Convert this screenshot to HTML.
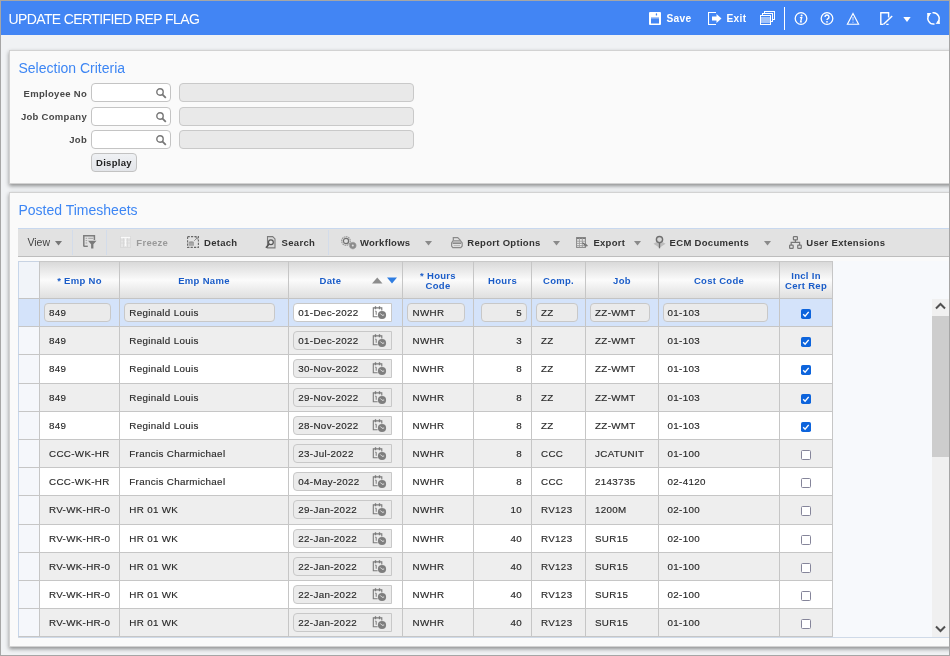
<!DOCTYPE html>
<html><head><meta charset="utf-8"><style>
html,body{margin:0;padding:0;width:950px;height:656px;overflow:hidden;background:#f0f2f4;}
.b,.t{position:absolute;box-sizing:border-box;}
.t{white-space:nowrap;font-family:"Liberation Sans",sans-serif;}
#root{position:absolute;left:0;top:0;width:950px;height:656px;will-change:transform;}
</style></head><body><div id="root">
<div class="b" style="left:0px;top:0px;width:950px;height:656px;border:1px solid #a6a6a6;box-sizing:border-box;background:#f0f2f4;"></div>
<div class="b" style="left:1px;top:1px;width:948px;height:34px;background:#4285f4;"></div>
<div class="t" style="left:8.5px;top:11.15px;font-size:14px;line-height:16.8px;color:#fff;font-weight:normal;letter-spacing:-.62px">UPDATE CERTIFIED REP FLAG</div>
<svg class="b" style="left:649px;top:12px" width="12" height="13" viewBox="0 0 12 13"><rect x="0" y="0" width="12" height="13" rx="1" fill="#fff"/><rect x="2" y="5" width="8" height="1.2" fill="#a9c7f7"/><rect x="2" y="6.3" width="8" height="5.2" fill="#4285f4"/><rect x="6.8" y="1.3" width="1.3" height="2.2" rx=".6" fill="#4285f4"/></svg>
<div class="t" style="left:666.5px;top:12.95px;font-size:10.2px;line-height:12.24px;color:#fff;font-weight:bold;letter-spacing:.3px">Save</div>
<svg class="b" style="left:708px;top:12px" width="15" height="13" viewBox="0 0 15 13"><path d="M8 0.5H0.5v12H8" fill="none" stroke="#fff" stroke-width="1.1"/><path d="M4 4.5h4.5V2l5 4.5-5 4.5V8.5H4z" fill="#fff"/></svg>
<div class="t" style="left:726.5px;top:12.95px;font-size:10.2px;line-height:12.24px;color:#fff;font-weight:bold;letter-spacing:.3px">Exit</div>
<svg class="b" style="left:760px;top:11px" width="15" height="14" viewBox="0 0 15 14"><rect x="4.5" y="0.5" width="10" height="8" fill="none" stroke="#fff"/><rect x="2.5" y="2.5" width="10" height="8" fill="#4285f4" stroke="#fff"/><rect x="0.5" y="4.5" width="10" height="9" fill="#4285f4" stroke="#fff"/><path d="M1 7h9M1 9h9M1 11h9" stroke="#fff"/></svg>
<div class="b" style="left:784px;top:7px;width:1px;height:23px;background:#fff;"></div>
<svg class="b" style="left:794px;top:12px" width="14" height="14" viewBox="0 0 14 14"><circle cx="7" cy="6.5" r="5.8" fill="none" stroke="#fff" stroke-width="1.3"/><circle cx="7.6" cy="3.6" r="1" fill="#fff"/><path d="M5.9 5.6h1.8l-1.1 4.3h1.3" fill="none" stroke="#fff" stroke-width="1.3"/></svg>
<svg class="b" style="left:820px;top:12px" width="14" height="14" viewBox="0 0 14 14"><circle cx="7" cy="6.5" r="5.8" fill="none" stroke="#fff" stroke-width="1.3"/><path d="M5 5a2 2 0 1 1 2.8 1.8c-.6.3-.8.6-.8 1.3" fill="none" stroke="#fff" stroke-width="1.4"/><circle cx="7" cy="9.8" r=".9" fill="#fff"/></svg>
<svg class="b" style="left:846px;top:12px" width="14" height="13" viewBox="0 0 14 13"><path d="M7 1.6L12.6 12.2H1.4z" fill="none" stroke="#fff" stroke-width="1.15"/><path d="M7 5v3.6" stroke="#fff" stroke-opacity=".7" stroke-width="1.1"/><circle cx="7" cy="10.2" r=".6" fill="#fff" fill-opacity=".7"/></svg>
<svg class="b" style="left:879px;top:11px" width="15" height="15" viewBox="0 0 15 15"><path d="M1.8 1.5v12.3M1.2 1.8h8.4V6.5M1.2 13.4h3.2M7.3 13.4h2.3" fill="none" stroke="#fff" stroke-width="1.4"/><path d="M4.6 13.2L13.2 5" stroke="#fff" stroke-width="1.5"/></svg>
<svg class="b" style="left:903px;top:17px" width="8" height="5" viewBox="0 0 8 5"><path d="M0.3 0h7.4L4 5z" fill="#fff"/></svg>
<svg class="b" style="left:926px;top:11px" width="15" height="15" viewBox="0 0 15 15"><path d="M6.5 1.8A5.7 5.7 0 0 1 11.5 11.4M8.5 13A5.7 5.7 0 0 1 3.5 3.4" fill="none" stroke="#fff" stroke-width="1.5"/><path d="M1.1 1.9L5.5 2.1 1.4 6.3z" fill="#fff"/><path d="M13.9 12.9L9.5 12.7 13.6 8.5z" fill="#fff"/></svg>
<div class="b" style="left:9px;top:50px;width:946px;height:134px;background:#fafafa;border:1px solid #d2d2d2;box-shadow:0 2px 4px rgba(0,0,0,.42);"></div>
<div class="t" style="left:18.5px;top:59.75px;font-size:14px;line-height:16.8px;color:#3d86f4;font-weight:normal;">Selection Criteria</div>
<div class="t" style="left:0px;top:88.01px;font-size:9.5px;line-height:11.4px;color:#474747;font-weight:bold;width:87px;text-align:right;letter-spacing:.3px;">Employee No</div>
<div class="b" style="left:91px;top:83px;width:80px;height:19.4px;background:#fff;border:1px solid #c4c4c4;border-radius:4px;"></div>
<svg class="b" style="left:156px;top:87.7px" width="11" height="11" viewBox="0 0 11 11"><circle cx="4" cy="4" r="3.2" fill="none" stroke="#777" stroke-width="1.4"/><path d="M6.3 6.3L9.8 9.8" stroke="#777" stroke-width="1.8"/></svg>
<div class="b" style="left:179px;top:83px;width:235px;height:19.4px;background:#e9e9e9;border:1px solid #c9c9c9;border-radius:4px;"></div>
<div class="t" style="left:0px;top:111.01px;font-size:9.5px;line-height:11.4px;color:#474747;font-weight:bold;width:87px;text-align:right;letter-spacing:.3px;">Job Company</div>
<div class="b" style="left:91px;top:107px;width:80px;height:18.5px;background:#fff;border:1px solid #c4c4c4;border-radius:4px;"></div>
<svg class="b" style="left:156px;top:111.7px" width="11" height="11" viewBox="0 0 11 11"><circle cx="4" cy="4" r="3.2" fill="none" stroke="#777" stroke-width="1.4"/><path d="M6.3 6.3L9.8 9.8" stroke="#777" stroke-width="1.8"/></svg>
<div class="b" style="left:179px;top:107px;width:235px;height:18.5px;background:#e9e9e9;border:1px solid #c9c9c9;border-radius:4px;"></div>
<div class="t" style="left:0px;top:134.01px;font-size:9.5px;line-height:11.4px;color:#474747;font-weight:bold;width:87px;text-align:right;letter-spacing:.3px;">Job</div>
<div class="b" style="left:91px;top:130px;width:80px;height:18.6px;background:#fff;border:1px solid #c4c4c4;border-radius:4px;"></div>
<svg class="b" style="left:156px;top:134.7px" width="11" height="11" viewBox="0 0 11 11"><circle cx="4" cy="4" r="3.2" fill="none" stroke="#777" stroke-width="1.4"/><path d="M6.3 6.3L9.8 9.8" stroke="#777" stroke-width="1.8"/></svg>
<div class="b" style="left:179px;top:130px;width:235px;height:18.6px;background:#e9e9e9;border:1px solid #c9c9c9;border-radius:4px;"></div>
<div class="b" style="left:91px;top:153px;width:46px;height:19px;background:linear-gradient(#eff1f4,#e3e5e9);border:1px solid #c2c2c2;border-radius:4px;"></div>
<div class="t" style="left:96px;top:157.01px;font-size:9.5px;line-height:11.4px;color:#222;font-weight:bold;letter-spacing:.3px;">Display</div>
<div class="b" style="left:9px;top:192px;width:946px;height:455px;background:#fafafa;border:1px solid #d2d2d2;box-shadow:0 2px 4px rgba(0,0,0,.42);"></div>
<div class="t" style="left:18.5px;top:201.75px;font-size:14px;line-height:16.8px;color:#3d86f4;font-weight:normal;">Posted Timesheets</div>
<div class="b" style="left:18px;top:228px;width:932px;height:29px;background:#e2e2e2;border-top:1px solid #c8d8ee;border-bottom:1px solid #bdbdbd;"></div>
<div class="b" style="left:72px;top:230px;width:1px;height:25px;background:#d3dcea;"></div>
<div class="b" style="left:106px;top:230px;width:1px;height:25px;background:#d3dcea;"></div>
<div class="b" style="left:328px;top:230px;width:1px;height:25px;background:#d3dcea;"></div>
<div class="t" style="left:27.4px;top:236.06px;font-size:10.5px;line-height:12.6px;color:#444;font-weight:normal;">View</div>
<svg class="b" style="left:55px;top:241px" width="7" height="5" viewBox="0 0 7 5"><path d="M0 0h7L3.5 4.5z" fill="#777"/></svg>
<svg class="b" style="left:83px;top:235px" width="14" height="14" viewBox="0 0 14 14"><path d="M0.8 11.5V0.8h10.6v4.2" fill="none" stroke="#7d7d7d" stroke-width="1.5"/><path d="M0.8 11.3h4" stroke="#7d7d7d" stroke-width="1.4"/><path d="M2.6 3.3h1.6M5.2 3.3h5M2.6 5.6h1.6M2.6 8h1.6" stroke="#a0a0a0" stroke-width="1"/><path d="M5 5.8h8.5l-3.1 3.4v4.2h-2.3V9.2z" fill="#7a7a7a"/></svg>
<svg class="b" style="left:120px;top:236px" width="11" height="12" viewBox="0 0 11 12"><rect x="0.5" y="0.5" width="10" height="11" fill="#e6e6e6" stroke="#d9d9d9"/><path d="M1 4h9M1 7h9M3.5 2v9M7.5 2v9" stroke="#d6d6d6" stroke-width=".8"/><path d="M0.8 1.4h9.4" stroke="#fafafa" stroke-width="1.4"/><path d="M5.5 2.5v7.5" stroke="#fafafa" stroke-width="1.3"/></svg>
<div class="t" style="left:136.3px;top:237.01px;font-size:9.5px;line-height:11.4px;color:#9a9a9a;font-weight:bold;letter-spacing:.3px;">Freeze</div>
<svg class="b" style="left:187px;top:236px" width="12" height="12" viewBox="0 0 12 12"><rect x="0.6" y="0.6" width="10.8" height="10.8" fill="none" stroke="#666" stroke-width="1.1" stroke-dasharray="2.2 1.2"/><ellipse cx="4.3" cy="6.3" rx="2.6" ry="1" fill="#9a9a9a"/><rect x="1.7" y="6.3" width="5.2" height="3.4" fill="#9a9a9a"/><path d="M2 8h4.6" stroke="#bdbdbd" stroke-width=".7"/><path d="M7.2 4.8l3-3M8.4 1.6h1.9v1.9" fill="none" stroke="#888" stroke-width=".9"/></svg>
<div class="t" style="left:204px;top:237.01px;font-size:9.5px;line-height:11.4px;color:#333;font-weight:bold;letter-spacing:.3px;">Detach</div>
<svg class="b" style="left:265px;top:236px" width="11" height="13" viewBox="0 0 11 13"><path d="M2.5 0.6h5.2l2.3 2.3v9H2.5z" fill="#d9d9d9" stroke="#7a7a7a" stroke-width="1.1"/><circle cx="5.9" cy="6.2" r="2.4" fill="#e8e8e8" stroke="#555" stroke-width="1.2"/><path d="M4.2 8L0.9 11.8" stroke="#555" stroke-width="1.5"/></svg>
<div class="t" style="left:281.6px;top:237.01px;font-size:9.5px;line-height:11.4px;color:#333;font-weight:bold;letter-spacing:.3px;">Search</div>
<svg class="b" style="left:340px;top:235px" width="18" height="15" viewBox="0 0 18 15"><circle cx="6" cy="6" r="4.3" fill="none" stroke="#9a9a9a" stroke-width="1.2" stroke-dasharray="1.6 .6"/><circle cx="6" cy="6" r="2.6" fill="none" stroke="#707070" stroke-width="1.2"/><circle cx="12.8" cy="10.6" r="3.3" fill="#8c8c8c" stroke="#9a9a9a" stroke-width=".8" stroke-dasharray="1.2 .5"/><circle cx="12.8" cy="10.6" r="1" fill="#e2e2e2"/></svg>
<div class="t" style="left:359.9px;top:237.01px;font-size:9.5px;line-height:11.4px;color:#333;font-weight:bold;letter-spacing:.3px;">Workflows</div>
<svg class="b" style="left:425px;top:241px" width="7" height="5" viewBox="0 0 7 5"><path d="M0 0h7L3.5 4.5z" fill="#8a8a8a"/></svg>
<svg class="b" style="left:451px;top:237px" width="12" height="12" viewBox="0 0 12 12"><path d="M2.3 3.6V0.6h4.4l2.6 2.6v0.6" fill="none" stroke="#8a8a8a" stroke-width="1.2"/><path d="M2 3.9h7.6l1.6 2v3.1l-1.4 1.6H1.8L0.6 9V5.9z" fill="none" stroke="#8a8a8a" stroke-width="1.2"/><path d="M1.6 6.2h8.6" stroke="#8a8a8a" stroke-width="1.6"/><path d="M2.6 8.6h6.4" stroke="#b5b5b5" stroke-width="1"/></svg>
<div class="t" style="left:467.3px;top:237.01px;font-size:9.5px;line-height:11.4px;color:#333;font-weight:bold;letter-spacing:.3px;">Report Options</div>
<svg class="b" style="left:553px;top:241px" width="7" height="5" viewBox="0 0 7 5"><path d="M0 0h7L3.5 4.5z" fill="#8a8a8a"/></svg>
<svg class="b" style="left:576px;top:237px" width="13" height="11" viewBox="0 0 13 11"><rect x="0.6" y="0.6" width="8.8" height="9.8" fill="#f0f0f0" stroke="#8a8a8a" stroke-width="1.1"/><path d="M0.6 1.3h8.8" stroke="#7a7a7a" stroke-width="1.6"/><path d="M0.6 4.2h8.8M0.6 6.4h8.8M0.6 8.6h8.8M3.4 1v9.5M6.3 1v9.5" stroke="#9a9a9a" stroke-width=".9"/><path d="M6.5 5.6l3.2 3" stroke="#6a6a6a" stroke-width="1.3"/><path d="M8.6 9.8l3.6-.9-2.7-2.6z" fill="#7a7a7a"/></svg>
<div class="t" style="left:593.4px;top:237.01px;font-size:9.5px;line-height:11.4px;color:#333;font-weight:bold;letter-spacing:.3px;">Export</div>
<svg class="b" style="left:634px;top:241px" width="7" height="5" viewBox="0 0 7 5"><path d="M0 0h7L3.5 4.5z" fill="#8a8a8a"/></svg>
<svg class="b" style="left:653px;top:235px" width="13" height="14" viewBox="0 0 13 14"><path d="M0.5 8.8l2.6-1.5h6.8l2.6 1.5-6 3.9z" fill="#bcbcbc"/><path d="M6.5 7.3v6" stroke="#6e6e6e" stroke-width="1.3"/><circle cx="6.5" cy="4.6" r="3.1" fill="#d6d6d6" stroke="#6e6e6e" stroke-width="1.4"/></svg>
<div class="t" style="left:669.6px;top:237.01px;font-size:9.5px;line-height:11.4px;color:#333;font-weight:bold;letter-spacing:.3px;">ECM Documents</div>
<svg class="b" style="left:764px;top:241px" width="7" height="5" viewBox="0 0 7 5"><path d="M0 0h7L3.5 4.5z" fill="#8a8a8a"/></svg>
<svg class="b" style="left:789px;top:236px" width="13" height="13" viewBox="0 0 13 13"><rect x="4.4" y="0.6" width="4" height="3.2" rx=".6" fill="none" stroke="#777" stroke-width="1.2"/><path d="M6.4 3.8v2.4M1.6 6.3h9.6M2.2 6.3v2.6M10.6 6.3v2.6" fill="none" stroke="#777" stroke-width="1.2"/><rect x="0.6" y="9.1" width="3.6" height="3.3" rx=".6" fill="none" stroke="#777" stroke-width="1.2"/><rect x="8.7" y="9.1" width="3.6" height="3.3" rx=".6" fill="none" stroke="#777" stroke-width="1.2"/></svg>
<div class="t" style="left:806.3px;top:237.01px;font-size:9.5px;line-height:11.4px;color:#333;font-weight:bold;letter-spacing:.3px;">User Extensions</div>
<div class="b" style="left:18px;top:261px;width:932px;height:377px;background:#f7f9fc;border-bottom:1px solid #cfdae8;"></div>
<div class="b" style="left:18px;top:261px;width:815px;height:38px;background:linear-gradient(#d9d9d9 0%,#fbfbfb 50%,#dfdfdf 100%);border-top:1px solid #c8c8c8;border-bottom:1px solid #c4c4c4;"></div>
<div class="b" style="left:18px;top:261px;width:22px;height:38px;background:#f1f4f9;border-left:1px solid #c7d6ea;border-top:1px solid #c8d3e3;border-bottom:1px solid #c4c4c4;"></div>
<div class="t" style="left:40px;top:274.61px;font-size:9.5px;line-height:11.4px;color:#1a5cc8;font-weight:bold;width:79px;text-align:center;letter-spacing:.3px;">* Emp No</div>
<div class="t" style="left:120px;top:274.61px;font-size:9.5px;line-height:11.4px;color:#1a5cc8;font-weight:bold;width:168px;text-align:center;letter-spacing:.3px;">Emp Name</div>
<div class="t" style="left:289px;top:274.61px;font-size:9.5px;line-height:11.4px;color:#1a5cc8;font-weight:bold;width:83px;text-align:center;letter-spacing:.3px;">Date</div>
<div class="t" style="left:403px;top:270.01px;font-size:9.5px;line-height:11.4px;color:#1a5cc8;font-weight:bold;width:70px;text-align:center;letter-spacing:.3px;">* Hours</div>
<div class="t" style="left:403px;top:280.01px;font-size:9.5px;line-height:11.4px;color:#1a5cc8;font-weight:bold;width:70px;text-align:center;letter-spacing:.3px;">Code</div>
<div class="t" style="left:474px;top:274.61px;font-size:9.5px;line-height:11.4px;color:#1a5cc8;font-weight:bold;width:57px;text-align:center;letter-spacing:.3px;">Hours</div>
<div class="t" style="left:532px;top:274.61px;font-size:9.5px;line-height:11.4px;color:#1a5cc8;font-weight:bold;width:53px;text-align:center;letter-spacing:.3px;">Comp.</div>
<div class="t" style="left:586px;top:274.61px;font-size:9.5px;line-height:11.4px;color:#1a5cc8;font-weight:bold;width:72px;text-align:center;letter-spacing:.3px;">Job</div>
<div class="t" style="left:659px;top:274.61px;font-size:9.5px;line-height:11.4px;color:#1a5cc8;font-weight:bold;width:120px;text-align:center;letter-spacing:.3px;">Cost Code</div>
<div class="t" style="left:780px;top:270.01px;font-size:9.5px;line-height:11.4px;color:#1a5cc8;font-weight:bold;width:52px;text-align:center;letter-spacing:.3px;">Incl In</div>
<div class="t" style="left:780px;top:280.01px;font-size:9.5px;line-height:11.4px;color:#1a5cc8;font-weight:bold;width:52px;text-align:center;letter-spacing:.3px;">Cert Rep</div>
<svg class="b" style="left:372px;top:277px" width="26" height="7" viewBox="0 0 26 7"><path d="M0 6.5h10.5L5.25 0.5z" fill="#8c8c8c"/><path d="M15 0.5h10L20 6.5z" fill="#2f7de1"/></svg>
<div class="b" style="left:18px;top:299px;width:815px;height:28px;background:#d4e3fa;border-bottom:1px solid #c6c6c6;"></div>
<div class="b" style="left:18px;top:299px;width:22px;height:28px;background:#d4e3fa;border-left:1px solid #c7d6ea;border-bottom:1px solid #c6c6c6;"></div>
<div class="b" style="left:44px;top:303px;width:67px;height:19px;background:#ebebeb;border:1px solid #c8c8c8;border-radius:4px;"></div>
<div class="t" style="left:49px;top:306.72px;font-size:9.8px;line-height:11.76px;color:#262626;font-weight:normal;letter-spacing:.33px;-webkit-text-stroke:.15px #333">849</div>
<div class="b" style="left:124px;top:303px;width:151px;height:19px;background:#ebebeb;border:1px solid #c8c8c8;border-radius:4px;"></div>
<div class="t" style="left:129.3px;top:306.72px;font-size:9.8px;line-height:11.76px;color:#262626;font-weight:normal;letter-spacing:.33px;-webkit-text-stroke:.15px #333">Reginald Louis</div>
<div class="b" style="left:293px;top:303px;width:99px;height:19px;background:#fff;border:1px solid #c8c8c8;border-radius:4px 0 0 4px;"></div>
<div class="t" style="left:298.3px;top:306.72px;font-size:9.8px;line-height:11.76px;color:#262626;font-weight:normal;letter-spacing:.33px;-webkit-text-stroke:.15px #333">01-Dec-2022</div>
<div class="b" style="left:407px;top:303px;width:58px;height:19px;background:#ebebeb;border:1px solid #c8c8c8;border-radius:4px;"></div>
<div class="t" style="left:412.5px;top:306.72px;font-size:9.8px;line-height:11.76px;color:#262626;font-weight:normal;letter-spacing:.33px;-webkit-text-stroke:.15px #333">NWHR</div>
<div class="b" style="left:481px;top:303px;width:46px;height:19px;background:#ebebeb;border:1px solid #c8c8c8;border-radius:4px;"></div>
<div class="t" style="left:481px;top:306.72px;font-size:9.8px;line-height:11.76px;color:#262626;font-weight:normal;width:41px;text-align:right;letter-spacing:.33px;-webkit-text-stroke:.15px #333">5</div>
<div class="b" style="left:536px;top:303px;width:42px;height:19px;background:#ebebeb;border:1px solid #c8c8c8;border-radius:4px;"></div>
<div class="t" style="left:541px;top:306.72px;font-size:9.8px;line-height:11.76px;color:#262626;font-weight:normal;letter-spacing:.33px;-webkit-text-stroke:.15px #333">ZZ</div>
<div class="b" style="left:590px;top:303px;width:60px;height:19px;background:#ebebeb;border:1px solid #c8c8c8;border-radius:4px;"></div>
<div class="t" style="left:595px;top:306.72px;font-size:9.8px;line-height:11.76px;color:#262626;font-weight:normal;letter-spacing:.33px;-webkit-text-stroke:.15px #333">ZZ-WMT</div>
<div class="b" style="left:663px;top:303px;width:105px;height:19px;background:#ebebeb;border:1px solid #c8c8c8;border-radius:4px;"></div>
<div class="t" style="left:667.5px;top:306.72px;font-size:9.8px;line-height:11.76px;color:#262626;font-weight:normal;letter-spacing:.33px;-webkit-text-stroke:.15px #333">01-103</div>
<svg class="b" style="left:372px;top:305px" width="15" height="15" viewBox="0 0 15 15"><path d="M5.6 11.7H1.3V2.9h8.5v2.6" fill="none" stroke="#7a7a7a" stroke-width="1.1"/><path d="M3.5 1.2v3M7.5 1.2v3" stroke="#7a7a7a" stroke-width="1.3"/><path d="M3.2 6.2h1v3.6" fill="none" stroke="#7a7a7a" stroke-width="1"/><circle cx="10" cy="10" r="4.1" fill="#7e7e7e"/><path d="M8.2 8.4l1.9 1.9 2.1-.3" fill="none" stroke="#e9e9e9" stroke-width=".9"/></svg>
<svg class="b" style="left:801px;top:309px" width="10" height="10" viewBox="0 0 10 10"><rect x="0" y="0" width="10" height="10" rx="1.8" fill="#0d64dc"/><path d="M2.2 5.3l1.9 1.9 3.6-4.3" fill="none" stroke="#fff" stroke-width="1.4"/></svg>
<div class="b" style="left:18px;top:327px;width:815px;height:28px;background:#eeeeee;border-bottom:1px solid #c6c6c6;"></div>
<div class="b" style="left:18px;top:327px;width:22px;height:28px;background:#f5f7fb;border-left:1px solid #c7d6ea;border-bottom:1px solid #c6c6c6;"></div>
<div class="t" style="left:49px;top:334.72px;font-size:9.8px;line-height:11.76px;color:#262626;font-weight:normal;letter-spacing:.33px;-webkit-text-stroke:.15px #333">849</div>
<div class="t" style="left:129.3px;top:334.72px;font-size:9.8px;line-height:11.76px;color:#262626;font-weight:normal;letter-spacing:.33px;-webkit-text-stroke:.15px #333">Reginald Louis</div>
<div class="b" style="left:293px;top:331px;width:99px;height:19px;background:#ebebeb;border:1px solid #c8c8c8;border-radius:4px 0 0 4px;"></div>
<div class="t" style="left:298.3px;top:334.72px;font-size:9.8px;line-height:11.76px;color:#262626;font-weight:normal;letter-spacing:.33px;-webkit-text-stroke:.15px #333">01-Dec-2022</div>
<div class="t" style="left:412.5px;top:334.72px;font-size:9.8px;line-height:11.76px;color:#262626;font-weight:normal;letter-spacing:.33px;-webkit-text-stroke:.15px #333">NWHR</div>
<div class="t" style="left:474px;top:334.72px;font-size:9.8px;line-height:11.76px;color:#262626;font-weight:normal;width:48px;text-align:right;letter-spacing:.33px;-webkit-text-stroke:.15px #333">3</div>
<div class="t" style="left:541px;top:334.72px;font-size:9.8px;line-height:11.76px;color:#262626;font-weight:normal;letter-spacing:.33px;-webkit-text-stroke:.15px #333">ZZ</div>
<div class="t" style="left:595px;top:334.72px;font-size:9.8px;line-height:11.76px;color:#262626;font-weight:normal;letter-spacing:.33px;-webkit-text-stroke:.15px #333">ZZ-WMT</div>
<div class="t" style="left:667.5px;top:334.72px;font-size:9.8px;line-height:11.76px;color:#262626;font-weight:normal;letter-spacing:.33px;-webkit-text-stroke:.15px #333">01-103</div>
<svg class="b" style="left:372px;top:333px" width="15" height="15" viewBox="0 0 15 15"><path d="M5.6 11.7H1.3V2.9h8.5v2.6" fill="none" stroke="#7a7a7a" stroke-width="1.1"/><path d="M3.5 1.2v3M7.5 1.2v3" stroke="#7a7a7a" stroke-width="1.3"/><path d="M3.2 6.2h1v3.6" fill="none" stroke="#7a7a7a" stroke-width="1"/><circle cx="10" cy="10" r="4.1" fill="#7e7e7e"/><path d="M8.2 8.4l1.9 1.9 2.1-.3" fill="none" stroke="#e9e9e9" stroke-width=".9"/></svg>
<svg class="b" style="left:801px;top:337px" width="10" height="10" viewBox="0 0 10 10"><rect x="0" y="0" width="10" height="10" rx="1.8" fill="#0d64dc"/><path d="M2.2 5.3l1.9 1.9 3.6-4.3" fill="none" stroke="#fff" stroke-width="1.4"/></svg>
<div class="b" style="left:18px;top:355px;width:815px;height:29px;background:#ffffff;border-bottom:1px solid #c6c6c6;"></div>
<div class="b" style="left:18px;top:355px;width:22px;height:29px;background:#f5f7fb;border-left:1px solid #c7d6ea;border-bottom:1px solid #c6c6c6;"></div>
<div class="t" style="left:49px;top:362.72px;font-size:9.8px;line-height:11.76px;color:#262626;font-weight:normal;letter-spacing:.33px;-webkit-text-stroke:.15px #333">849</div>
<div class="t" style="left:129.3px;top:362.72px;font-size:9.8px;line-height:11.76px;color:#262626;font-weight:normal;letter-spacing:.33px;-webkit-text-stroke:.15px #333">Reginald Louis</div>
<div class="b" style="left:293px;top:359px;width:99px;height:19px;background:#ebebeb;border:1px solid #c8c8c8;border-radius:4px 0 0 4px;"></div>
<div class="t" style="left:298.3px;top:362.72px;font-size:9.8px;line-height:11.76px;color:#262626;font-weight:normal;letter-spacing:.33px;-webkit-text-stroke:.15px #333">30-Nov-2022</div>
<div class="t" style="left:412.5px;top:362.72px;font-size:9.8px;line-height:11.76px;color:#262626;font-weight:normal;letter-spacing:.33px;-webkit-text-stroke:.15px #333">NWHR</div>
<div class="t" style="left:474px;top:362.72px;font-size:9.8px;line-height:11.76px;color:#262626;font-weight:normal;width:48px;text-align:right;letter-spacing:.33px;-webkit-text-stroke:.15px #333">8</div>
<div class="t" style="left:541px;top:362.72px;font-size:9.8px;line-height:11.76px;color:#262626;font-weight:normal;letter-spacing:.33px;-webkit-text-stroke:.15px #333">ZZ</div>
<div class="t" style="left:595px;top:362.72px;font-size:9.8px;line-height:11.76px;color:#262626;font-weight:normal;letter-spacing:.33px;-webkit-text-stroke:.15px #333">ZZ-WMT</div>
<div class="t" style="left:667.5px;top:362.72px;font-size:9.8px;line-height:11.76px;color:#262626;font-weight:normal;letter-spacing:.33px;-webkit-text-stroke:.15px #333">01-103</div>
<svg class="b" style="left:372px;top:361px" width="15" height="15" viewBox="0 0 15 15"><path d="M5.6 11.7H1.3V2.9h8.5v2.6" fill="none" stroke="#7a7a7a" stroke-width="1.1"/><path d="M3.5 1.2v3M7.5 1.2v3" stroke="#7a7a7a" stroke-width="1.3"/><path d="M3.2 6.2h1v3.6" fill="none" stroke="#7a7a7a" stroke-width="1"/><circle cx="10" cy="10" r="4.1" fill="#7e7e7e"/><path d="M8.2 8.4l1.9 1.9 2.1-.3" fill="none" stroke="#e9e9e9" stroke-width=".9"/></svg>
<svg class="b" style="left:801px;top:365px" width="10" height="10" viewBox="0 0 10 10"><rect x="0" y="0" width="10" height="10" rx="1.8" fill="#0d64dc"/><path d="M2.2 5.3l1.9 1.9 3.6-4.3" fill="none" stroke="#fff" stroke-width="1.4"/></svg>
<div class="b" style="left:18px;top:384px;width:815px;height:28px;background:#eeeeee;border-bottom:1px solid #c6c6c6;"></div>
<div class="b" style="left:18px;top:384px;width:22px;height:28px;background:#f5f7fb;border-left:1px solid #c7d6ea;border-bottom:1px solid #c6c6c6;"></div>
<div class="t" style="left:49px;top:391.72px;font-size:9.8px;line-height:11.76px;color:#262626;font-weight:normal;letter-spacing:.33px;-webkit-text-stroke:.15px #333">849</div>
<div class="t" style="left:129.3px;top:391.72px;font-size:9.8px;line-height:11.76px;color:#262626;font-weight:normal;letter-spacing:.33px;-webkit-text-stroke:.15px #333">Reginald Louis</div>
<div class="b" style="left:293px;top:388px;width:99px;height:19px;background:#ebebeb;border:1px solid #c8c8c8;border-radius:4px 0 0 4px;"></div>
<div class="t" style="left:298.3px;top:391.72px;font-size:9.8px;line-height:11.76px;color:#262626;font-weight:normal;letter-spacing:.33px;-webkit-text-stroke:.15px #333">29-Nov-2022</div>
<div class="t" style="left:412.5px;top:391.72px;font-size:9.8px;line-height:11.76px;color:#262626;font-weight:normal;letter-spacing:.33px;-webkit-text-stroke:.15px #333">NWHR</div>
<div class="t" style="left:474px;top:391.72px;font-size:9.8px;line-height:11.76px;color:#262626;font-weight:normal;width:48px;text-align:right;letter-spacing:.33px;-webkit-text-stroke:.15px #333">8</div>
<div class="t" style="left:541px;top:391.72px;font-size:9.8px;line-height:11.76px;color:#262626;font-weight:normal;letter-spacing:.33px;-webkit-text-stroke:.15px #333">ZZ</div>
<div class="t" style="left:595px;top:391.72px;font-size:9.8px;line-height:11.76px;color:#262626;font-weight:normal;letter-spacing:.33px;-webkit-text-stroke:.15px #333">ZZ-WMT</div>
<div class="t" style="left:667.5px;top:391.72px;font-size:9.8px;line-height:11.76px;color:#262626;font-weight:normal;letter-spacing:.33px;-webkit-text-stroke:.15px #333">01-103</div>
<svg class="b" style="left:372px;top:390px" width="15" height="15" viewBox="0 0 15 15"><path d="M5.6 11.7H1.3V2.9h8.5v2.6" fill="none" stroke="#7a7a7a" stroke-width="1.1"/><path d="M3.5 1.2v3M7.5 1.2v3" stroke="#7a7a7a" stroke-width="1.3"/><path d="M3.2 6.2h1v3.6" fill="none" stroke="#7a7a7a" stroke-width="1"/><circle cx="10" cy="10" r="4.1" fill="#7e7e7e"/><path d="M8.2 8.4l1.9 1.9 2.1-.3" fill="none" stroke="#e9e9e9" stroke-width=".9"/></svg>
<svg class="b" style="left:801px;top:394px" width="10" height="10" viewBox="0 0 10 10"><rect x="0" y="0" width="10" height="10" rx="1.8" fill="#0d64dc"/><path d="M2.2 5.3l1.9 1.9 3.6-4.3" fill="none" stroke="#fff" stroke-width="1.4"/></svg>
<div class="b" style="left:18px;top:412px;width:815px;height:28px;background:#ffffff;border-bottom:1px solid #c6c6c6;"></div>
<div class="b" style="left:18px;top:412px;width:22px;height:28px;background:#f5f7fb;border-left:1px solid #c7d6ea;border-bottom:1px solid #c6c6c6;"></div>
<div class="t" style="left:49px;top:419.72px;font-size:9.8px;line-height:11.76px;color:#262626;font-weight:normal;letter-spacing:.33px;-webkit-text-stroke:.15px #333">849</div>
<div class="t" style="left:129.3px;top:419.72px;font-size:9.8px;line-height:11.76px;color:#262626;font-weight:normal;letter-spacing:.33px;-webkit-text-stroke:.15px #333">Reginald Louis</div>
<div class="b" style="left:293px;top:416px;width:99px;height:19px;background:#ebebeb;border:1px solid #c8c8c8;border-radius:4px 0 0 4px;"></div>
<div class="t" style="left:298.3px;top:419.72px;font-size:9.8px;line-height:11.76px;color:#262626;font-weight:normal;letter-spacing:.33px;-webkit-text-stroke:.15px #333">28-Nov-2022</div>
<div class="t" style="left:412.5px;top:419.72px;font-size:9.8px;line-height:11.76px;color:#262626;font-weight:normal;letter-spacing:.33px;-webkit-text-stroke:.15px #333">NWHR</div>
<div class="t" style="left:474px;top:419.72px;font-size:9.8px;line-height:11.76px;color:#262626;font-weight:normal;width:48px;text-align:right;letter-spacing:.33px;-webkit-text-stroke:.15px #333">8</div>
<div class="t" style="left:541px;top:419.72px;font-size:9.8px;line-height:11.76px;color:#262626;font-weight:normal;letter-spacing:.33px;-webkit-text-stroke:.15px #333">ZZ</div>
<div class="t" style="left:595px;top:419.72px;font-size:9.8px;line-height:11.76px;color:#262626;font-weight:normal;letter-spacing:.33px;-webkit-text-stroke:.15px #333">ZZ-WMT</div>
<div class="t" style="left:667.5px;top:419.72px;font-size:9.8px;line-height:11.76px;color:#262626;font-weight:normal;letter-spacing:.33px;-webkit-text-stroke:.15px #333">01-103</div>
<svg class="b" style="left:372px;top:418px" width="15" height="15" viewBox="0 0 15 15"><path d="M5.6 11.7H1.3V2.9h8.5v2.6" fill="none" stroke="#7a7a7a" stroke-width="1.1"/><path d="M3.5 1.2v3M7.5 1.2v3" stroke="#7a7a7a" stroke-width="1.3"/><path d="M3.2 6.2h1v3.6" fill="none" stroke="#7a7a7a" stroke-width="1"/><circle cx="10" cy="10" r="4.1" fill="#7e7e7e"/><path d="M8.2 8.4l1.9 1.9 2.1-.3" fill="none" stroke="#e9e9e9" stroke-width=".9"/></svg>
<svg class="b" style="left:801px;top:422px" width="10" height="10" viewBox="0 0 10 10"><rect x="0" y="0" width="10" height="10" rx="1.8" fill="#0d64dc"/><path d="M2.2 5.3l1.9 1.9 3.6-4.3" fill="none" stroke="#fff" stroke-width="1.4"/></svg>
<div class="b" style="left:18px;top:440px;width:815px;height:28px;background:#eeeeee;border-bottom:1px solid #c6c6c6;"></div>
<div class="b" style="left:18px;top:440px;width:22px;height:28px;background:#f5f7fb;border-left:1px solid #c7d6ea;border-bottom:1px solid #c6c6c6;"></div>
<div class="t" style="left:49px;top:447.72px;font-size:9.8px;line-height:11.76px;color:#262626;font-weight:normal;letter-spacing:.33px;-webkit-text-stroke:.15px #333">CCC-WK-HR</div>
<div class="t" style="left:129.3px;top:447.72px;font-size:9.8px;line-height:11.76px;color:#262626;font-weight:normal;letter-spacing:.33px;-webkit-text-stroke:.15px #333">Francis Charmichael</div>
<div class="b" style="left:293px;top:444px;width:99px;height:19px;background:#ebebeb;border:1px solid #c8c8c8;border-radius:4px 0 0 4px;"></div>
<div class="t" style="left:298.3px;top:447.72px;font-size:9.8px;line-height:11.76px;color:#262626;font-weight:normal;letter-spacing:.33px;-webkit-text-stroke:.15px #333">23-Jul-2022</div>
<div class="t" style="left:412.5px;top:447.72px;font-size:9.8px;line-height:11.76px;color:#262626;font-weight:normal;letter-spacing:.33px;-webkit-text-stroke:.15px #333">NWHR</div>
<div class="t" style="left:474px;top:447.72px;font-size:9.8px;line-height:11.76px;color:#262626;font-weight:normal;width:48px;text-align:right;letter-spacing:.33px;-webkit-text-stroke:.15px #333">8</div>
<div class="t" style="left:541px;top:447.72px;font-size:9.8px;line-height:11.76px;color:#262626;font-weight:normal;letter-spacing:.33px;-webkit-text-stroke:.15px #333">CCC</div>
<div class="t" style="left:595px;top:447.72px;font-size:9.8px;line-height:11.76px;color:#262626;font-weight:normal;letter-spacing:.33px;-webkit-text-stroke:.15px #333">JCATUNIT</div>
<div class="t" style="left:667.5px;top:447.72px;font-size:9.8px;line-height:11.76px;color:#262626;font-weight:normal;letter-spacing:.33px;-webkit-text-stroke:.15px #333">01-100</div>
<svg class="b" style="left:372px;top:446px" width="15" height="15" viewBox="0 0 15 15"><path d="M5.6 11.7H1.3V2.9h8.5v2.6" fill="none" stroke="#7a7a7a" stroke-width="1.1"/><path d="M3.5 1.2v3M7.5 1.2v3" stroke="#7a7a7a" stroke-width="1.3"/><path d="M3.2 6.2h1v3.6" fill="none" stroke="#7a7a7a" stroke-width="1"/><circle cx="10" cy="10" r="4.1" fill="#7e7e7e"/><path d="M8.2 8.4l1.9 1.9 2.1-.3" fill="none" stroke="#e9e9e9" stroke-width=".9"/></svg>
<svg class="b" style="left:801px;top:450px" width="10" height="10" viewBox="0 0 10 10"><rect x="0.5" y="0.5" width="9" height="9" rx="1" fill="#fff" stroke="#85859a"/></svg>
<div class="b" style="left:18px;top:468px;width:815px;height:28px;background:#ffffff;border-bottom:1px solid #c6c6c6;"></div>
<div class="b" style="left:18px;top:468px;width:22px;height:28px;background:#f5f7fb;border-left:1px solid #c7d6ea;border-bottom:1px solid #c6c6c6;"></div>
<div class="t" style="left:49px;top:475.72px;font-size:9.8px;line-height:11.76px;color:#262626;font-weight:normal;letter-spacing:.33px;-webkit-text-stroke:.15px #333">CCC-WK-HR</div>
<div class="t" style="left:129.3px;top:475.72px;font-size:9.8px;line-height:11.76px;color:#262626;font-weight:normal;letter-spacing:.33px;-webkit-text-stroke:.15px #333">Francis Charmichael</div>
<div class="b" style="left:293px;top:472px;width:99px;height:19px;background:#ebebeb;border:1px solid #c8c8c8;border-radius:4px 0 0 4px;"></div>
<div class="t" style="left:298.3px;top:475.72px;font-size:9.8px;line-height:11.76px;color:#262626;font-weight:normal;letter-spacing:.33px;-webkit-text-stroke:.15px #333">04-May-2022</div>
<div class="t" style="left:412.5px;top:475.72px;font-size:9.8px;line-height:11.76px;color:#262626;font-weight:normal;letter-spacing:.33px;-webkit-text-stroke:.15px #333">NWHR</div>
<div class="t" style="left:474px;top:475.72px;font-size:9.8px;line-height:11.76px;color:#262626;font-weight:normal;width:48px;text-align:right;letter-spacing:.33px;-webkit-text-stroke:.15px #333">8</div>
<div class="t" style="left:541px;top:475.72px;font-size:9.8px;line-height:11.76px;color:#262626;font-weight:normal;letter-spacing:.33px;-webkit-text-stroke:.15px #333">CCC</div>
<div class="t" style="left:595px;top:475.72px;font-size:9.8px;line-height:11.76px;color:#262626;font-weight:normal;letter-spacing:.33px;-webkit-text-stroke:.15px #333">2143735</div>
<div class="t" style="left:667.5px;top:475.72px;font-size:9.8px;line-height:11.76px;color:#262626;font-weight:normal;letter-spacing:.33px;-webkit-text-stroke:.15px #333">02-4120</div>
<svg class="b" style="left:372px;top:474px" width="15" height="15" viewBox="0 0 15 15"><path d="M5.6 11.7H1.3V2.9h8.5v2.6" fill="none" stroke="#7a7a7a" stroke-width="1.1"/><path d="M3.5 1.2v3M7.5 1.2v3" stroke="#7a7a7a" stroke-width="1.3"/><path d="M3.2 6.2h1v3.6" fill="none" stroke="#7a7a7a" stroke-width="1"/><circle cx="10" cy="10" r="4.1" fill="#7e7e7e"/><path d="M8.2 8.4l1.9 1.9 2.1-.3" fill="none" stroke="#e9e9e9" stroke-width=".9"/></svg>
<svg class="b" style="left:801px;top:478px" width="10" height="10" viewBox="0 0 10 10"><rect x="0.5" y="0.5" width="9" height="9" rx="1" fill="#fff" stroke="#85859a"/></svg>
<div class="b" style="left:18px;top:496px;width:815px;height:29px;background:#eeeeee;border-bottom:1px solid #c6c6c6;"></div>
<div class="b" style="left:18px;top:496px;width:22px;height:29px;background:#f5f7fb;border-left:1px solid #c7d6ea;border-bottom:1px solid #c6c6c6;"></div>
<div class="t" style="left:49px;top:503.72px;font-size:9.8px;line-height:11.76px;color:#262626;font-weight:normal;letter-spacing:.33px;-webkit-text-stroke:.15px #333">RV-WK-HR-0</div>
<div class="t" style="left:129.3px;top:503.72px;font-size:9.8px;line-height:11.76px;color:#262626;font-weight:normal;letter-spacing:.33px;-webkit-text-stroke:.15px #333">HR 01 WK</div>
<div class="b" style="left:293px;top:500px;width:99px;height:19px;background:#ebebeb;border:1px solid #c8c8c8;border-radius:4px 0 0 4px;"></div>
<div class="t" style="left:298.3px;top:503.72px;font-size:9.8px;line-height:11.76px;color:#262626;font-weight:normal;letter-spacing:.33px;-webkit-text-stroke:.15px #333">29-Jan-2022</div>
<div class="t" style="left:412.5px;top:503.72px;font-size:9.8px;line-height:11.76px;color:#262626;font-weight:normal;letter-spacing:.33px;-webkit-text-stroke:.15px #333">NWHR</div>
<div class="t" style="left:474px;top:503.72px;font-size:9.8px;line-height:11.76px;color:#262626;font-weight:normal;width:48px;text-align:right;letter-spacing:.33px;-webkit-text-stroke:.15px #333">10</div>
<div class="t" style="left:541px;top:503.72px;font-size:9.8px;line-height:11.76px;color:#262626;font-weight:normal;letter-spacing:.33px;-webkit-text-stroke:.15px #333">RV123</div>
<div class="t" style="left:595px;top:503.72px;font-size:9.8px;line-height:11.76px;color:#262626;font-weight:normal;letter-spacing:.33px;-webkit-text-stroke:.15px #333">1200M</div>
<div class="t" style="left:667.5px;top:503.72px;font-size:9.8px;line-height:11.76px;color:#262626;font-weight:normal;letter-spacing:.33px;-webkit-text-stroke:.15px #333">02-100</div>
<svg class="b" style="left:372px;top:502px" width="15" height="15" viewBox="0 0 15 15"><path d="M5.6 11.7H1.3V2.9h8.5v2.6" fill="none" stroke="#7a7a7a" stroke-width="1.1"/><path d="M3.5 1.2v3M7.5 1.2v3" stroke="#7a7a7a" stroke-width="1.3"/><path d="M3.2 6.2h1v3.6" fill="none" stroke="#7a7a7a" stroke-width="1"/><circle cx="10" cy="10" r="4.1" fill="#7e7e7e"/><path d="M8.2 8.4l1.9 1.9 2.1-.3" fill="none" stroke="#e9e9e9" stroke-width=".9"/></svg>
<svg class="b" style="left:801px;top:506px" width="10" height="10" viewBox="0 0 10 10"><rect x="0.5" y="0.5" width="9" height="9" rx="1" fill="#fff" stroke="#85859a"/></svg>
<div class="b" style="left:18px;top:525px;width:815px;height:28px;background:#ffffff;border-bottom:1px solid #c6c6c6;"></div>
<div class="b" style="left:18px;top:525px;width:22px;height:28px;background:#f5f7fb;border-left:1px solid #c7d6ea;border-bottom:1px solid #c6c6c6;"></div>
<div class="t" style="left:49px;top:532.72px;font-size:9.8px;line-height:11.76px;color:#262626;font-weight:normal;letter-spacing:.33px;-webkit-text-stroke:.15px #333">RV-WK-HR-0</div>
<div class="t" style="left:129.3px;top:532.72px;font-size:9.8px;line-height:11.76px;color:#262626;font-weight:normal;letter-spacing:.33px;-webkit-text-stroke:.15px #333">HR 01 WK</div>
<div class="b" style="left:293px;top:529px;width:99px;height:19px;background:#ebebeb;border:1px solid #c8c8c8;border-radius:4px 0 0 4px;"></div>
<div class="t" style="left:298.3px;top:532.72px;font-size:9.8px;line-height:11.76px;color:#262626;font-weight:normal;letter-spacing:.33px;-webkit-text-stroke:.15px #333">22-Jan-2022</div>
<div class="t" style="left:412.5px;top:532.72px;font-size:9.8px;line-height:11.76px;color:#262626;font-weight:normal;letter-spacing:.33px;-webkit-text-stroke:.15px #333">NWHR</div>
<div class="t" style="left:474px;top:532.72px;font-size:9.8px;line-height:11.76px;color:#262626;font-weight:normal;width:48px;text-align:right;letter-spacing:.33px;-webkit-text-stroke:.15px #333">40</div>
<div class="t" style="left:541px;top:532.72px;font-size:9.8px;line-height:11.76px;color:#262626;font-weight:normal;letter-spacing:.33px;-webkit-text-stroke:.15px #333">RV123</div>
<div class="t" style="left:595px;top:532.72px;font-size:9.8px;line-height:11.76px;color:#262626;font-weight:normal;letter-spacing:.33px;-webkit-text-stroke:.15px #333">SUR15</div>
<div class="t" style="left:667.5px;top:532.72px;font-size:9.8px;line-height:11.76px;color:#262626;font-weight:normal;letter-spacing:.33px;-webkit-text-stroke:.15px #333">02-100</div>
<svg class="b" style="left:372px;top:531px" width="15" height="15" viewBox="0 0 15 15"><path d="M5.6 11.7H1.3V2.9h8.5v2.6" fill="none" stroke="#7a7a7a" stroke-width="1.1"/><path d="M3.5 1.2v3M7.5 1.2v3" stroke="#7a7a7a" stroke-width="1.3"/><path d="M3.2 6.2h1v3.6" fill="none" stroke="#7a7a7a" stroke-width="1"/><circle cx="10" cy="10" r="4.1" fill="#7e7e7e"/><path d="M8.2 8.4l1.9 1.9 2.1-.3" fill="none" stroke="#e9e9e9" stroke-width=".9"/></svg>
<svg class="b" style="left:801px;top:535px" width="10" height="10" viewBox="0 0 10 10"><rect x="0.5" y="0.5" width="9" height="9" rx="1" fill="#fff" stroke="#85859a"/></svg>
<div class="b" style="left:18px;top:553px;width:815px;height:28px;background:#eeeeee;border-bottom:1px solid #c6c6c6;"></div>
<div class="b" style="left:18px;top:553px;width:22px;height:28px;background:#f5f7fb;border-left:1px solid #c7d6ea;border-bottom:1px solid #c6c6c6;"></div>
<div class="t" style="left:49px;top:560.72px;font-size:9.8px;line-height:11.76px;color:#262626;font-weight:normal;letter-spacing:.33px;-webkit-text-stroke:.15px #333">RV-WK-HR-0</div>
<div class="t" style="left:129.3px;top:560.72px;font-size:9.8px;line-height:11.76px;color:#262626;font-weight:normal;letter-spacing:.33px;-webkit-text-stroke:.15px #333">HR 01 WK</div>
<div class="b" style="left:293px;top:557px;width:99px;height:19px;background:#ebebeb;border:1px solid #c8c8c8;border-radius:4px 0 0 4px;"></div>
<div class="t" style="left:298.3px;top:560.72px;font-size:9.8px;line-height:11.76px;color:#262626;font-weight:normal;letter-spacing:.33px;-webkit-text-stroke:.15px #333">22-Jan-2022</div>
<div class="t" style="left:412.5px;top:560.72px;font-size:9.8px;line-height:11.76px;color:#262626;font-weight:normal;letter-spacing:.33px;-webkit-text-stroke:.15px #333">NWHR</div>
<div class="t" style="left:474px;top:560.72px;font-size:9.8px;line-height:11.76px;color:#262626;font-weight:normal;width:48px;text-align:right;letter-spacing:.33px;-webkit-text-stroke:.15px #333">40</div>
<div class="t" style="left:541px;top:560.72px;font-size:9.8px;line-height:11.76px;color:#262626;font-weight:normal;letter-spacing:.33px;-webkit-text-stroke:.15px #333">RV123</div>
<div class="t" style="left:595px;top:560.72px;font-size:9.8px;line-height:11.76px;color:#262626;font-weight:normal;letter-spacing:.33px;-webkit-text-stroke:.15px #333">SUR15</div>
<div class="t" style="left:667.5px;top:560.72px;font-size:9.8px;line-height:11.76px;color:#262626;font-weight:normal;letter-spacing:.33px;-webkit-text-stroke:.15px #333">01-100</div>
<svg class="b" style="left:372px;top:559px" width="15" height="15" viewBox="0 0 15 15"><path d="M5.6 11.7H1.3V2.9h8.5v2.6" fill="none" stroke="#7a7a7a" stroke-width="1.1"/><path d="M3.5 1.2v3M7.5 1.2v3" stroke="#7a7a7a" stroke-width="1.3"/><path d="M3.2 6.2h1v3.6" fill="none" stroke="#7a7a7a" stroke-width="1"/><circle cx="10" cy="10" r="4.1" fill="#7e7e7e"/><path d="M8.2 8.4l1.9 1.9 2.1-.3" fill="none" stroke="#e9e9e9" stroke-width=".9"/></svg>
<svg class="b" style="left:801px;top:563px" width="10" height="10" viewBox="0 0 10 10"><rect x="0.5" y="0.5" width="9" height="9" rx="1" fill="#fff" stroke="#85859a"/></svg>
<div class="b" style="left:18px;top:581px;width:815px;height:28px;background:#ffffff;border-bottom:1px solid #c6c6c6;"></div>
<div class="b" style="left:18px;top:581px;width:22px;height:28px;background:#f5f7fb;border-left:1px solid #c7d6ea;border-bottom:1px solid #c6c6c6;"></div>
<div class="t" style="left:49px;top:588.72px;font-size:9.8px;line-height:11.76px;color:#262626;font-weight:normal;letter-spacing:.33px;-webkit-text-stroke:.15px #333">RV-WK-HR-0</div>
<div class="t" style="left:129.3px;top:588.72px;font-size:9.8px;line-height:11.76px;color:#262626;font-weight:normal;letter-spacing:.33px;-webkit-text-stroke:.15px #333">HR 01 WK</div>
<div class="b" style="left:293px;top:585px;width:99px;height:19px;background:#ebebeb;border:1px solid #c8c8c8;border-radius:4px 0 0 4px;"></div>
<div class="t" style="left:298.3px;top:588.72px;font-size:9.8px;line-height:11.76px;color:#262626;font-weight:normal;letter-spacing:.33px;-webkit-text-stroke:.15px #333">22-Jan-2022</div>
<div class="t" style="left:412.5px;top:588.72px;font-size:9.8px;line-height:11.76px;color:#262626;font-weight:normal;letter-spacing:.33px;-webkit-text-stroke:.15px #333">NWHR</div>
<div class="t" style="left:474px;top:588.72px;font-size:9.8px;line-height:11.76px;color:#262626;font-weight:normal;width:48px;text-align:right;letter-spacing:.33px;-webkit-text-stroke:.15px #333">40</div>
<div class="t" style="left:541px;top:588.72px;font-size:9.8px;line-height:11.76px;color:#262626;font-weight:normal;letter-spacing:.33px;-webkit-text-stroke:.15px #333">RV123</div>
<div class="t" style="left:595px;top:588.72px;font-size:9.8px;line-height:11.76px;color:#262626;font-weight:normal;letter-spacing:.33px;-webkit-text-stroke:.15px #333">SUR15</div>
<div class="t" style="left:667.5px;top:588.72px;font-size:9.8px;line-height:11.76px;color:#262626;font-weight:normal;letter-spacing:.33px;-webkit-text-stroke:.15px #333">02-100</div>
<svg class="b" style="left:372px;top:587px" width="15" height="15" viewBox="0 0 15 15"><path d="M5.6 11.7H1.3V2.9h8.5v2.6" fill="none" stroke="#7a7a7a" stroke-width="1.1"/><path d="M3.5 1.2v3M7.5 1.2v3" stroke="#7a7a7a" stroke-width="1.3"/><path d="M3.2 6.2h1v3.6" fill="none" stroke="#7a7a7a" stroke-width="1"/><circle cx="10" cy="10" r="4.1" fill="#7e7e7e"/><path d="M8.2 8.4l1.9 1.9 2.1-.3" fill="none" stroke="#e9e9e9" stroke-width=".9"/></svg>
<svg class="b" style="left:801px;top:591px" width="10" height="10" viewBox="0 0 10 10"><rect x="0.5" y="0.5" width="9" height="9" rx="1" fill="#fff" stroke="#85859a"/></svg>
<div class="b" style="left:18px;top:609px;width:815px;height:28px;background:#eeeeee;border-bottom:1px solid #c6c6c6;"></div>
<div class="b" style="left:18px;top:609px;width:22px;height:28px;background:#f5f7fb;border-left:1px solid #c7d6ea;border-bottom:1px solid #c6c6c6;"></div>
<div class="t" style="left:49px;top:616.72px;font-size:9.8px;line-height:11.76px;color:#262626;font-weight:normal;letter-spacing:.33px;-webkit-text-stroke:.15px #333">RV-WK-HR-0</div>
<div class="t" style="left:129.3px;top:616.72px;font-size:9.8px;line-height:11.76px;color:#262626;font-weight:normal;letter-spacing:.33px;-webkit-text-stroke:.15px #333">HR 01 WK</div>
<div class="b" style="left:293px;top:613px;width:99px;height:19px;background:#ebebeb;border:1px solid #c8c8c8;border-radius:4px 0 0 4px;"></div>
<div class="t" style="left:298.3px;top:616.72px;font-size:9.8px;line-height:11.76px;color:#262626;font-weight:normal;letter-spacing:.33px;-webkit-text-stroke:.15px #333">22-Jan-2022</div>
<div class="t" style="left:412.5px;top:616.72px;font-size:9.8px;line-height:11.76px;color:#262626;font-weight:normal;letter-spacing:.33px;-webkit-text-stroke:.15px #333">NWHR</div>
<div class="t" style="left:474px;top:616.72px;font-size:9.8px;line-height:11.76px;color:#262626;font-weight:normal;width:48px;text-align:right;letter-spacing:.33px;-webkit-text-stroke:.15px #333">40</div>
<div class="t" style="left:541px;top:616.72px;font-size:9.8px;line-height:11.76px;color:#262626;font-weight:normal;letter-spacing:.33px;-webkit-text-stroke:.15px #333">RV123</div>
<div class="t" style="left:595px;top:616.72px;font-size:9.8px;line-height:11.76px;color:#262626;font-weight:normal;letter-spacing:.33px;-webkit-text-stroke:.15px #333">SUR15</div>
<div class="t" style="left:667.5px;top:616.72px;font-size:9.8px;line-height:11.76px;color:#262626;font-weight:normal;letter-spacing:.33px;-webkit-text-stroke:.15px #333">01-100</div>
<svg class="b" style="left:372px;top:615px" width="15" height="15" viewBox="0 0 15 15"><path d="M5.6 11.7H1.3V2.9h8.5v2.6" fill="none" stroke="#7a7a7a" stroke-width="1.1"/><path d="M3.5 1.2v3M7.5 1.2v3" stroke="#7a7a7a" stroke-width="1.3"/><path d="M3.2 6.2h1v3.6" fill="none" stroke="#7a7a7a" stroke-width="1"/><circle cx="10" cy="10" r="4.1" fill="#7e7e7e"/><path d="M8.2 8.4l1.9 1.9 2.1-.3" fill="none" stroke="#e9e9e9" stroke-width=".9"/></svg>
<svg class="b" style="left:801px;top:619px" width="10" height="10" viewBox="0 0 10 10"><rect x="0.5" y="0.5" width="9" height="9" rx="1" fill="#fff" stroke="#85859a"/></svg>
<div class="b" style="left:39px;top:261px;width:1px;height:376px;background:#c6c6c6;"></div>
<div class="b" style="left:119px;top:261px;width:1px;height:376px;background:#c6c6c6;"></div>
<div class="b" style="left:288px;top:261px;width:1px;height:376px;background:#c6c6c6;"></div>
<div class="b" style="left:402px;top:261px;width:1px;height:376px;background:#c6c6c6;"></div>
<div class="b" style="left:473px;top:261px;width:1px;height:376px;background:#c6c6c6;"></div>
<div class="b" style="left:531px;top:261px;width:1px;height:376px;background:#c6c6c6;"></div>
<div class="b" style="left:585px;top:261px;width:1px;height:376px;background:#c6c6c6;"></div>
<div class="b" style="left:658px;top:261px;width:1px;height:376px;background:#c6c6c6;"></div>
<div class="b" style="left:779px;top:261px;width:1px;height:376px;background:#c6c6c6;"></div>
<div class="b" style="left:832px;top:261px;width:1px;height:376px;background:#c6c6c6;"></div>
<div class="b" style="left:932px;top:299px;width:17px;height:338px;background:#f0f0f0;"></div>
<div class="b" style="left:932px;top:316px;width:17px;height:141px;background:#cdcdcd;"></div>
<svg class="b" style="left:935px;top:302px" width="11" height="8" viewBox="0 0 11 8"><path d="M1 6.5l4.5-4.5 4.5 4.5" fill="none" stroke="#505050" stroke-width="2"/></svg>
<svg class="b" style="left:935px;top:625px" width="11" height="8" viewBox="0 0 11 8"><path d="M1 1.5l4.5 4.5 4.5-4.5" fill="none" stroke="#505050" stroke-width="2"/></svg>
<div class="b" style="left:949px;top:0px;width:1px;height:656px;background:#a6a6a6;"></div>
<div class="b" style="left:0px;top:655px;width:950px;height:1px;background:#a6a6a6;"></div>
</div></body></html>
